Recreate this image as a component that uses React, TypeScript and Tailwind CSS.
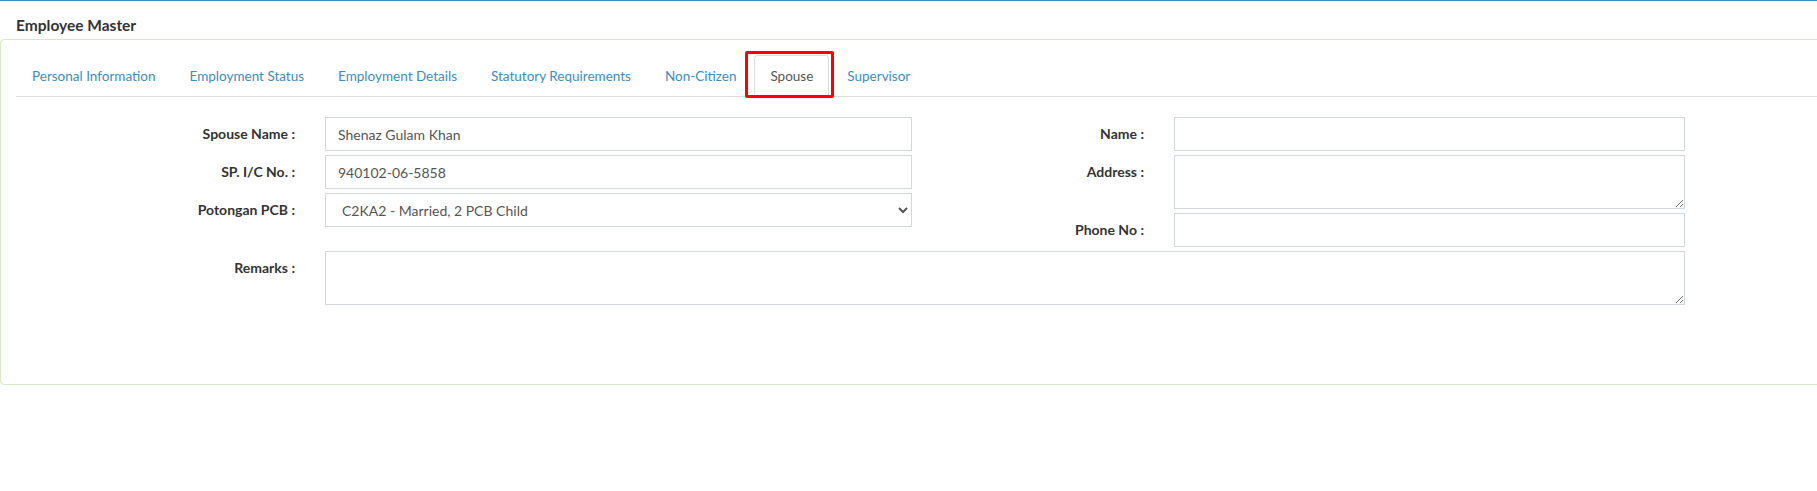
import { useState } from "react";

const tabs = [
  "Personal Information",
  "Employment Status",
  "Employment Details",
  "Statutory Requirements",
  "Non-Citizen",
  "Spouse",
  "Supervisor",
];

const inputClass =
  "h-[34px] w-full border border-[#d2d6de] bg-white px-3 text-[14px] text-[#555] outline-none";
const labelClass = "pt-[7px] text-right text-[14px] font-bold leading-5 text-[#333]";

function Field({ label, children, labelWidth }: { label: string; children: React.ReactNode; labelWidth: string }) {
  return (
    <div className={`grid gap-x-[30px] ${labelWidth}`}>
      <label className={labelClass}>{label}</label>
      {children}
    </div>
  );
}

export default function App() {
  const [active, setActive] = useState("Spouse");

  return (
    <div className="min-h-screen w-full overflow-hidden bg-white font-['Lato','Liberation_Sans',sans-serif] text-[#333]">
      <div className="h-px w-full bg-[#3c8dbc]" />
      <h3 className="mb-[2px] pl-4 pt-[12px] text-[15.5px] font-bold leading-6 text-[#333]">Employee Master</h3>

      <div className="w-[1860px] rounded border border-[#d6e9c6] pb-[79px] pl-[15px] pt-[15px]">
        <ul className="flex border-b border-[#ddd]">
          {tabs.map((tab) => {
            const isActive = tab === active;
            return (
              <li key={tab} className="relative -mb-px mr-[2px]">
                <button
                  onClick={() => setActive(tab)}
                  className={
                    isActive
                      ? "block rounded-t border border-[#ddd] border-b-transparent bg-white px-[15px] py-[10px] text-[13.5px] leading-5 text-[#555]"
                      : "block rounded-t border border-transparent px-[15px] py-[10px] text-[13.5px] leading-5 text-[#3c8dbc]"
                  }
                >
                  {tab}
                </button>
                {isActive && (
                  <span className="pointer-events-none absolute -bottom-[1px] -left-[9px] -right-[5px] -top-[4px] rounded-[2px] border-[3px] border-[#ff0000]" />
                )}
              </li>
            );
          })}
        </ul>

        <div className="pt-5">
          <div className="flex items-start">
            <div className="flex w-[896px] flex-col gap-1">
              <Field label="Spouse Name :" labelWidth="grid-cols-[279px_587px]">
                <input className={inputClass} defaultValue="Shenaz Gulam Khan" />
              </Field>
              <Field label="SP. I/C No. :" labelWidth="grid-cols-[279px_587px]">
                <input className={inputClass} defaultValue="940102-06-5858" />
              </Field>
              <Field label="Potongan PCB :" labelWidth="grid-cols-[279px_587px]">
                <select className={`${inputClass} pl-[12px]`} defaultValue="C2KA2">
                  <option value="C2KA2">C2KA2 - Married, 2 PCB Child</option>
                </select>
              </Field>
            </div>

            <div className="ml-[30px] flex flex-col gap-1">
              <Field label="Name :" labelWidth="grid-cols-[202px_511px]">
                <input className={inputClass} />
              </Field>
              <Field label="Address :" labelWidth="grid-cols-[202px_511px]">
                <textarea className="block h-[54px] w-full border border-[#d2d6de] bg-white px-3 py-[6px] text-[14px] text-[#555] outline-none" />
              </Field>
              <Field label="Phone No :" labelWidth="grid-cols-[202px_511px]">
                <input className={inputClass} />
              </Field>
            </div>
          </div>

          <div className="mt-1">
            <Field label="Remarks :" labelWidth="grid-cols-[279px_1360px]">
              <textarea className="block h-[54px] w-full border border-[#d2d6de] bg-white px-3 py-[6px] text-[14px] text-[#555] outline-none" />
            </Field>
          </div>
        </div>
      </div>
    </div>
  );
}
